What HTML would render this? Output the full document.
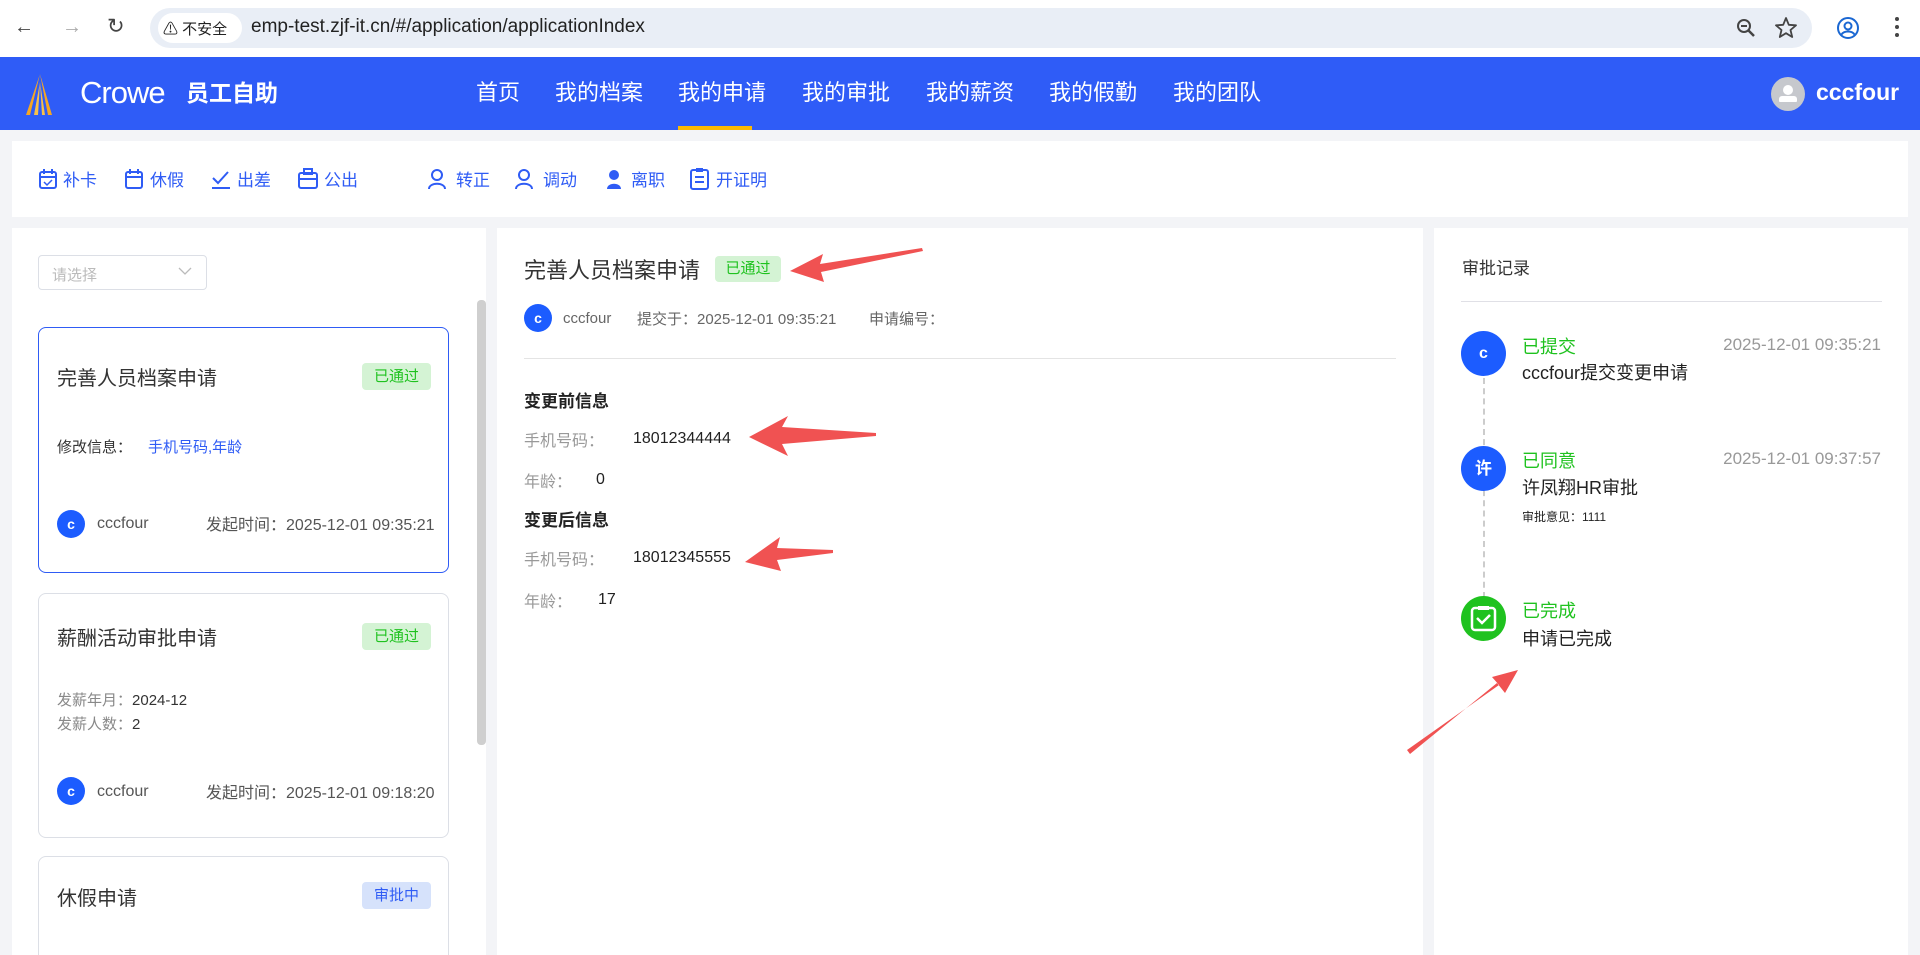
<!DOCTYPE html>
<html><head><meta charset="utf-8">
<style>
*{margin:0;padding:0;box-sizing:border-box}
html,body{width:1920px;height:955px;overflow:hidden}
body{background:#f3f4f7;font-family:"Liberation Sans","Noto Sans CJK SC",sans-serif;position:relative;color:#333}
.a{position:absolute;white-space:nowrap}
.chrome{left:0;top:0;width:1920px;height:57px;background:#fff}
.pill{left:150px;top:8px;width:1662px;height:40px;background:#e9eef6;border-radius:20px}
.hdr{left:0;top:57px;width:1920px;height:73px;background:#2f5cf7}
.nav{top:75px;font-size:22px;color:#fff}
.panel{background:#fff}
.tb{top:166px;font-size:17px;color:#2f5cf5}
.badge{font-size:15px;border-radius:4px;text-align:center}
.g{background:#d4f3d4;color:#1fc21f}
.av{border-radius:50%;background:#1c5cff;color:#fff;text-align:center;font-weight:bold}
.lbl{color:#999;font-size:16px}
.val{color:#222;font-size:16px}
</style></head><body>
<div class="a chrome"></div>
<div class="a pill"></div>
<div class="a" style="left:14px;top:16px;font-size:20px;color:#444">←</div>
<div class="a" style="left:62px;top:16px;font-size:20px;color:#aaa">→</div>
<div class="a" style="left:107px;top:14px;font-size:21px;color:#444">↻</div>
<div class="a" style="left:158px;top:13px;width:84px;height:30px;background:#fff;border-radius:15px"></div>
<div class="a" style="left:163px;top:18px;font-size:15px;color:#222">⚠ 不安全</div>
<div class="a" style="left:251px;top:16px;font-size:19px;color:#222">emp-test.zjf-it.cn/#/application/applicationIndex</div>
<svg class="a" style="left:1736px;top:18px" width="22" height="22"><circle cx="8" cy="8" r="6" fill="none" stroke="#444" stroke-width="2"/><line x1="5" y1="8" x2="11" y2="8" stroke="#444" stroke-width="2"/><line x1="12" y1="12" x2="18" y2="18" stroke="#444" stroke-width="2.5"/></svg>
<svg class="a" style="left:1774px;top:16px" width="24" height="24"><path d="M12 2 L14.8 8.8 L22 9.3 L16.5 14 L18.2 21 L12 17.2 L5.8 21 L7.5 14 L2 9.3 L9.2 8.8 Z" fill="none" stroke="#444" stroke-width="1.8" stroke-linejoin="round"/></svg>
<svg class="a" style="left:1836px;top:16px" width="24" height="24"><circle cx="12" cy="12" r="10" fill="none" stroke="#1a67d2" stroke-width="2"/><circle cx="12" cy="10" r="3.5" fill="none" stroke="#1a67d2" stroke-width="2"/><path d="M5.5 18.5 C8 14.5 16 14.5 18.5 18.5" fill="none" stroke="#1a67d2" stroke-width="2"/></svg>
<div class="a" style="left:1895px;top:17px;width:4px;height:4px;border-radius:2px;background:#444;box-shadow:0 8px 0 #444,0 16px 0 #444"></div>

<div class="a hdr"></div>
<svg class="a" style="left:12px;top:72px" width="60" height="45"><path d="M28 2 L14 43 L18 43 Z" fill="#f5a623"/><path d="M28 2 L40 43 L36 43 Z" fill="#f5a623"/><path d="M28 10 L22 43 L26 43Z" fill="#f7c04a"/><path d="M28 10 L33 43 L30 43Z" fill="#f7c04a"/></svg>
<div class="a" style="left:80px;top:75px;font-size:31px;color:#fff;letter-spacing:-1px">Crowe</div>
<div class="a" style="left:186px;top:74px;font-size:23px;color:#fff;font-weight:bold">员工自助</div>
<div class="a nav" style="left:476px">首页</div>
<div class="a nav" style="left:555px">我的档案</div>
<div class="a nav" style="left:678px">我的申请</div>
<div class="a nav" style="left:802px">我的审批</div>
<div class="a nav" style="left:926px">我的薪资</div>
<div class="a nav" style="left:1049px">我的假勤</div>
<div class="a nav" style="left:1173px">我的团队</div>
<div class="a" style="left:678px;top:126px;width:74px;height:4px;background:#fcb900"></div>
<div class="a" style="left:1771px;top:77px;width:34px;height:34px;border-radius:50%;background:#c6c8cd"></div>
<div class="a" style="left:1783px;top:85px;width:10px;height:10px;border-radius:50%;background:#fff"></div>
<div class="a" style="left:1779px;top:96px;width:18px;height:6px;border-radius:3px 3px 1px 1px;background:#fff"></div>
<div class="a" style="left:1816px;top:79px;font-size:23px;color:#fff;font-weight:bold">cccfour</div>

<div class="a panel" style="left:12px;top:141px;width:1896px;height:76px"></div>
<svg class="a" style="left:38px;top:168px" width="20" height="22"><rect x="2" y="4" width="16" height="16" rx="2" fill="none" stroke="#2f5cf5" stroke-width="2"/><line x1="2" y1="9" x2="18" y2="9" stroke="#2f5cf5" stroke-width="2"/><line x1="6" y1="1" x2="6" y2="6" stroke="#2f5cf5" stroke-width="2"/><line x1="14" y1="1" x2="14" y2="6" stroke="#2f5cf5" stroke-width="2"/><path d="M6 14 L9 17 L14 12" fill="none" stroke="#2f5cf5" stroke-width="1.5"/></svg>
<div class="a tb" style="left:63px">补卡</div>
<svg class="a" style="left:124px;top:168px" width="20" height="22"><rect x="2" y="4" width="16" height="16" rx="2" fill="none" stroke="#2f5cf5" stroke-width="2"/><line x1="2" y1="9" x2="18" y2="9" stroke="#2f5cf5" stroke-width="2"/><line x1="6" y1="1" x2="6" y2="6" stroke="#2f5cf5" stroke-width="2"/><line x1="14" y1="1" x2="14" y2="6" stroke="#2f5cf5" stroke-width="2"/></svg>
<div class="a tb" style="left:150px">休假</div>
<svg class="a" style="left:210px;top:168px" width="22" height="22"><path d="M3 10 L8 15 L18 4" fill="none" stroke="#2f5cf5" stroke-width="2"/><line x1="2" y1="20" x2="20" y2="20" stroke="#2f5cf5" stroke-width="2"/></svg>
<div class="a tb" style="left:237px">出差</div>
<svg class="a" style="left:297px;top:168px" width="22" height="22"><rect x="2" y="5" width="18" height="15" rx="2" fill="none" stroke="#2f5cf5" stroke-width="2"/><rect x="7" y="1" width="8" height="5" fill="none" stroke="#2f5cf5" stroke-width="2"/><line x1="2" y1="11" x2="20" y2="11" stroke="#2f5cf5" stroke-width="2"/></svg>
<div class="a tb" style="left:324px">公出</div>
<svg class="a" style="left:427px;top:168px" width="22" height="22"><circle cx="10" cy="7" r="5" fill="none" stroke="#2f5cf5" stroke-width="2"/><path d="M2 21 C2 14 18 14 18 21" fill="none" stroke="#2f5cf5" stroke-width="2"/></svg>
<div class="a tb" style="left:456px">转正</div>
<svg class="a" style="left:514px;top:168px" width="22" height="22"><circle cx="10" cy="7" r="5" fill="none" stroke="#2f5cf5" stroke-width="2"/><path d="M2 21 C2 14 18 14 18 21" fill="none" stroke="#2f5cf5" stroke-width="2"/></svg>
<div class="a tb" style="left:543px">调动</div>
<svg class="a" style="left:604px;top:168px" width="22" height="22"><circle cx="10" cy="7" r="5" fill="#2f5cf5"/><path d="M3 21 C3 14 17 14 17 21Z" fill="#2f5cf5"/></svg>
<div class="a tb" style="left:631px">离职</div>
<svg class="a" style="left:689px;top:167px" width="22" height="24"><rect x="2" y="3" width="17" height="19" rx="2" fill="none" stroke="#2f5cf5" stroke-width="2"/><rect x="7" y="1" width="7" height="4" fill="#2f5cf5"/><line x1="6" y1="10" x2="15" y2="10" stroke="#2f5cf5" stroke-width="2"/><line x1="6" y1="15" x2="15" y2="15" stroke="#2f5cf5" stroke-width="2"/></svg>
<div class="a tb" style="left:716px">开证明</div>

<!-- left panel -->
<div class="a panel" style="left:12px;top:228px;width:474px;height:727px;overflow:hidden">
<div class="a" style="left:26px;top:628px;width:411px;height:140px;border:1px solid #dcdfe6;border-radius:8px"></div>
</div>
<div class="a" style="left:38px;top:255px;width:169px;height:35px;border:1px solid #dcdfe6;border-radius:4px"></div>
<div class="a" style="left:52px;top:264px;font-size:15px;color:#bbb">请选择</div>
<svg class="a" style="left:178px;top:266px" width="14" height="10"><path d="M1 2 L7 8 L13 2" fill="none" stroke="#bbb" stroke-width="1.3"/></svg>
<div class="a" style="left:477px;top:300px;width:9px;height:445px;background:#cfcfcf;border-radius:4px"></div>

<div class="a" style="left:38px;top:327px;width:411px;height:246px;border:1.5px solid #2f5cf5;border-radius:8px"></div>
<div class="a" style="left:57px;top:362px;font-size:20px;color:#333">完善人员档案申请</div>
<div class="a badge g" style="left:362px;top:363px;width:69px;height:27px;line-height:27px">已通过</div>
<div class="a" style="left:57px;top:436px;font-size:15px;color:#333">修改信息：</div>
<div class="a" style="left:148px;top:436px;font-size:15px;color:#2f5cf5">手机号码,年龄</div>
<div class="a av" style="left:57px;top:510px;width:28px;height:28px;line-height:28px;font-size:14px">c</div>
<div class="a" style="left:97px;top:515px;font-size:16px;color:#555">cccfour</div>
<div class="a" style="left:206px;top:511px;font-size:16px;color:#555">发起时间：2025-12-01 09:35:21</div>

<div class="a" style="left:38px;top:593px;width:411px;height:245px;border:1px solid #dcdfe6;border-radius:8px"></div>
<div class="a" style="left:57px;top:622px;font-size:20px;color:#333">薪酬活动审批申请</div>
<div class="a badge g" style="left:362px;top:623px;width:69px;height:27px;line-height:27px">已通过</div>
<div class="a" style="left:57px;top:689px;font-size:15px;color:#888">发薪年月：<span style="color:#333">2024-12</span></div>
<div class="a" style="left:57px;top:713px;font-size:15px;color:#888">发薪人数：<span style="color:#333">2</span></div>
<div class="a av" style="left:57px;top:777px;width:28px;height:28px;line-height:28px;font-size:14px">c</div>
<div class="a" style="left:97px;top:783px;font-size:16px;color:#555">cccfour</div>
<div class="a" style="left:206px;top:779px;font-size:16px;color:#555">发起时间：2025-12-01 09:18:20</div>

<div class="a" style="left:57px;top:882px;font-size:20px;color:#333">休假申请</div>
<div class="a badge" style="left:362px;top:882px;width:69px;height:27px;line-height:27px;background:#d6e2fb;color:#2f5cf5">审批中</div>

<!-- middle -->
<div class="a panel" style="left:497px;top:228px;width:926px;height:727px"></div>
<div class="a" style="left:524px;top:253px;font-size:22px;color:#333">完善人员档案申请</div>
<div class="a badge g" style="left:715px;top:256px;width:66px;height:26px;line-height:26px;font-size:15px">已通过</div>
<div class="a av" style="left:524px;top:304px;width:28px;height:28px;line-height:28px;font-size:14px">c</div>
<div class="a" style="left:563px;top:310px;font-size:15px;color:#666">cccfour</div>
<div class="a" style="left:637px;top:308px;font-size:15px;color:#666">提交于：2025-12-01 09:35:21</div>
<div class="a" style="left:869px;top:308px;font-size:15px;color:#666">申请编号：</div>
<div class="a" style="left:524px;top:358px;width:872px;height:1px;background:#e4e4e4"></div>
<div class="a" style="left:524px;top:387px;font-size:17px;color:#222;font-weight:bold">变更前信息</div>
<div class="a lbl" style="left:524px;top:427px">手机号码：</div>
<div class="a val" style="left:633px;top:430px">18012344444</div>
<div class="a lbl" style="left:524px;top:468px">年龄：</div>
<div class="a val" style="left:596px;top:471px">0</div>
<div class="a" style="left:524px;top:506px;font-size:17px;color:#222;font-weight:bold">变更后信息</div>
<div class="a lbl" style="left:524px;top:546px">手机号码：</div>
<div class="a val" style="left:633px;top:549px">18012345555</div>
<div class="a lbl" style="left:524px;top:588px">年龄：</div>
<div class="a val" style="left:598px;top:591px">17</div>

<!-- right -->
<div class="a panel" style="left:1434px;top:228px;width:474px;height:727px"></div>
<div class="a" style="left:1462px;top:254px;font-size:17px;color:#333">审批记录</div>
<div class="a" style="left:1461px;top:301px;width:421px;height:1px;background:#e0e0e6"></div>
<div class="a" style="left:1483px;top:378px;width:0;height:220px;border-left:2px dashed #ccc"></div>
<div class="a av" style="left:1461px;top:331px;width:45px;height:45px;line-height:45px;font-size:16px">c</div>
<div class="a av" style="left:1461px;top:446px;width:45px;height:45px;line-height:45px;font-size:17px">许</div>
<div class="a" style="left:1461px;top:596px;width:45px;height:45px;border-radius:50%;background:#1fc21f"></div>
<svg class="a" style="left:1469px;top:604px" width="29" height="29"><rect x="3" y="4" width="23" height="22" rx="3" fill="none" stroke="#fff" stroke-width="2.5"/><line x1="9" y1="4" x2="20" y2="4" stroke="#fff" stroke-width="4"/><path d="M8 14 L13 19 L21 11" fill="none" stroke="#fff" stroke-width="2.5"/></svg>
<div class="a" style="left:1522px;top:333px;font-size:18px;color:#1fc21f">已提交</div>
<div class="a" style="left:1881px;top:335px;font-size:17px;color:#999;transform:translateX(-100%)">2025-12-01 09:35:21</div>
<div class="a" style="left:1522px;top:359px;font-size:18px;color:#222">cccfour提交变更申请</div>
<div class="a" style="left:1522px;top:447px;font-size:18px;color:#1fc21f">已同意</div>
<div class="a" style="left:1881px;top:449px;font-size:17px;color:#999;transform:translateX(-100%)">2025-12-01 09:37:57</div>
<div class="a" style="left:1522px;top:474px;font-size:18px;color:#222">许凤翔HR审批</div>
<div class="a" style="left:1522px;top:508px;font-size:12px;color:#222">审批意见：1111</div>
<div class="a" style="left:1522px;top:597px;font-size:18px;color:#1fc21f">已完成</div>
<div class="a" style="left:1522px;top:625px;font-size:18px;color:#222">申请已完成</div>

<!-- arrows -->
<svg class="a" style="left:0;top:0" width="1920" height="955">
<g fill="#f05252">
<polygon points="922,248 820,264 823,254 790,271 824,282 821,272 923,251"/>
<polygon points="876,433 782,427 788,416 749,437 788,456 782,444 876,436"/>
<polygon points="833,550 777,548 780,537 745,562 781,571 777,560 833,553"/>
<polygon points="1410,754 1497,683 1505,693 1518,670 1492,677 1499,685 1407,750"/>
</g></svg>
</body></html>
